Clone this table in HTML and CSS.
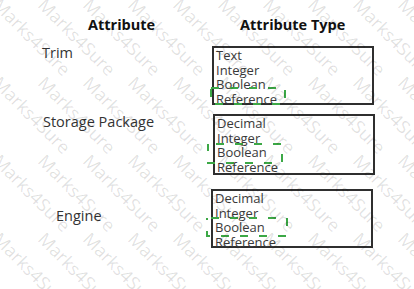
FILE: index.html
```html
<!DOCTYPE html>
<html lang="en">
<head>
<meta charset="utf-8">
<title>Attribute Types</title>
<link rel="stylesheet" href="styles.css">
</head>
<body>
<main class="sheet">
  <div class="head">
    <div class="head-attr">Attribute</div>
    <div class="head-type">Attribute Type</div>
  </div>

  <div class="row row-trim">
    <div class="label">Trim</div>
    <div class="box">
      <div class="opt">Text</div>
      <div class="opt">Integer</div>
      <div class="opt">Boolean</div>
      <div class="opt">Reference</div>
      <svg class="pick pick-1" width="78" height="20" viewBox="0 0 78 20"><rect x="2" y="2" width="74" height="16" fill="none" stroke="#3ca846" stroke-width="2" stroke-dasharray="8 11"/></svg>
    </div>
  </div>

  <div class="row row-storage">
    <div class="label">Storage Package</div>
    <div class="box">
      <div class="opt">Decimal</div>
      <div class="opt">Integer</div>
      <div class="opt">Boolean</div>
      <div class="opt">Reference</div>
      <svg class="pick pick-2" width="78" height="23" viewBox="0 0 78 23"><rect x="2" y="2" width="74" height="19" fill="none" stroke="#3ca846" stroke-width="2" stroke-dasharray="8 11" stroke-dashoffset="-8"/></svg>
    </div>
  </div>

  <div class="row row-engine">
    <div class="label">Engine</div>
    <div class="box">
      <div class="opt">Decimal</div>
      <div class="opt">Integer</div>
      <div class="opt">Boolean</div>
      <div class="opt">Reference</div>
      <svg class="pick pick-3" width="84" height="22" viewBox="0 0 84 22"><rect x="2" y="2" width="80" height="18" fill="none" stroke="#3ca846" stroke-width="2" stroke-dasharray="8 11" stroke-dashoffset="-4"/></svg>
    </div>
  </div>
</main>

<div class="watermark" aria-hidden="true">
  <span style="left:3px;top:-5px">Marks4Sure</span><span style="left:48px;top:-5px">Marks4Sure</span><span style="left:93px;top:-5px">Marks4Sure</span><span style="left:138px;top:-5px">Marks4Sure</span><span style="left:183px;top:-5px">Marks4Sure</span><span style="left:228px;top:-5px">Marks4Sure</span><span style="left:273px;top:-5px">Marks4Sure</span><span style="left:318px;top:-5px">Marks4Sure</span><span style="left:363px;top:-5px">Marks4Sure</span><span style="left:408px;top:-5px">Marks4Sure</span>
  <span style="left:3px;top:73px">Marks4Sure</span><span style="left:48px;top:73px">Marks4Sure</span><span style="left:93px;top:73px">Marks4Sure</span><span style="left:138px;top:73px">Marks4Sure</span><span style="left:183px;top:73px">Marks4Sure</span><span style="left:228px;top:73px">Marks4Sure</span><span style="left:273px;top:73px">Marks4Sure</span><span style="left:318px;top:73px">Marks4Sure</span><span style="left:363px;top:73px">Marks4Sure</span><span style="left:408px;top:73px">Marks4Sure</span>
  <span style="left:3px;top:151px">Marks4Sure</span><span style="left:48px;top:151px">Marks4Sure</span><span style="left:93px;top:151px">Marks4Sure</span><span style="left:138px;top:151px">Marks4Sure</span><span style="left:183px;top:151px">Marks4Sure</span><span style="left:228px;top:151px">Marks4Sure</span><span style="left:273px;top:151px">Marks4Sure</span><span style="left:318px;top:151px">Marks4Sure</span><span style="left:363px;top:151px">Marks4Sure</span><span style="left:408px;top:151px">Marks4Sure</span>
  <span style="left:3px;top:229px">Marks4Sure</span><span style="left:48px;top:229px">Marks4Sure</span><span style="left:93px;top:229px">Marks4Sure</span><span style="left:138px;top:229px">Marks4Sure</span><span style="left:183px;top:229px">Marks4Sure</span><span style="left:228px;top:229px">Marks4Sure</span><span style="left:273px;top:229px">Marks4Sure</span><span style="left:318px;top:229px">Marks4Sure</span><span style="left:363px;top:229px">Marks4Sure</span><span style="left:408px;top:229px">Marks4Sure</span>
</div>
</body>
</html>
```

FILE: styles.css
```css
html, body {
  margin: 0;
  padding: 0;
  background: #ffffff;
}

body {
  width: 414px;
  height: 289px;
  overflow: hidden;
  position: relative;
  font-family: "Open Sans", "DejaVu Sans", sans-serif;
  color: #2e2e2e;
}

.sheet {
  display: flex;
  flex-direction: column;
  padding-top: 16px;
}

.head {
  display: flex;
  font-weight: 700;
  font-size: 14.5px;
  line-height: 18px;
  color: #111111;
  height: 18px;
}

.head-attr {
  width: 240px;
  padding-left: 88px;
  box-sizing: border-box;
}

.head-type {
  white-space: nowrap;
}

.row {
  display: flex;
  align-items: flex-start;
}

.row-trim { margin-top: 12px; }
.row-storage { margin-top: 9px; }
.row-engine { margin-top: 14px; }

.label {
  width: 212px;
  box-sizing: border-box;
  font-size: 14.5px;
  line-height: 18px;
  color: #333333;
  white-space: nowrap;
}

.row-trim .label { padding-left: 42px; margin-top: -2px; }
.row-storage .label { padding-left: 43px; margin-top: -1px; }
.row-engine .label { padding-left: 56px; margin-top: 18px; }

.box {
  position: relative;
  width: 162px;
  height: 59px;
  box-sizing: border-box;
  border: 2px solid #2f2f2f;
  padding: 0 0 0 2px;
  font-size: 13px;
  line-height: 14.5px;
  color: #3a3a3a;
}

.row-storage .box { margin-left: 1px; height: 61px; }
.row-engine .box { margin-left: -1px; }

.opt {
  white-space: nowrap;
}

.pick {
  position: absolute;
  display: block;
}

.pick-1 { left: -5px; top: 38px; }
.pick-2 { left: -9px; top: 26px; }
.pick-3 { left: -8px; top: 25px; }

.watermark {
  position: absolute;
  inset: 0;
  pointer-events: none;
  overflow: hidden;
}

.watermark span {
  position: absolute;
  font-family: "Open Sans", "DejaVu Sans", sans-serif;
  font-size: 18px;
  line-height: 18px;
  color: rgba(0, 0, 0, 0.12);
  white-space: nowrap;
  transform-origin: 0 0;
  transform: rotate(45deg);
}
```
